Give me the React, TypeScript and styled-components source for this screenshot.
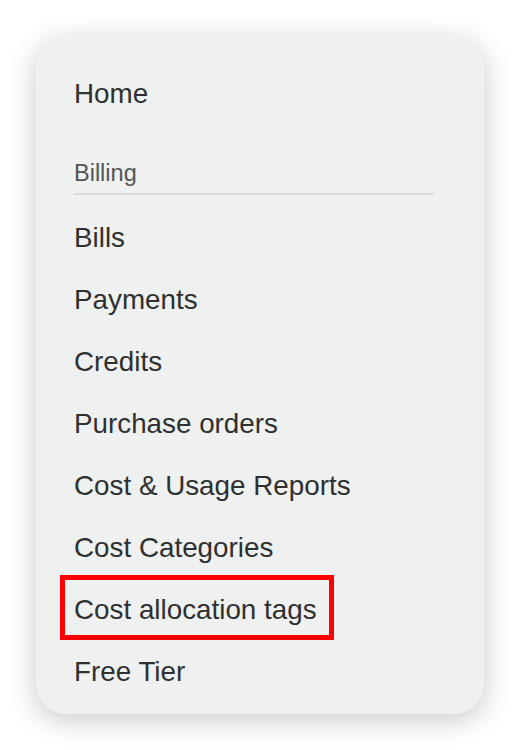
import React from "react";
import styled, { createGlobalStyle } from "styled-components";

const Global = createGlobalStyle`
  html, body { margin: 0; padding: 0; background: #ffffff; }
  body { font-family: "Liberation Sans", Arial, Helvetica, sans-serif; }
`;

const Page = styled.div`
  padding: 36px;
  width: 520px;
  height: 750px;
  box-sizing: border-box;
`;

const Card = styled.nav`
  width: 448px;
  height: 678px;
  box-sizing: border-box;
  background: #eff0f0;
  border-radius: 30px;
  box-shadow: 0 6px 28px rgba(0, 0, 0, 0.22);
  padding: 27px 50px 0 38px;
  display: flex;
  flex-direction: column;
`;

const Item = styled.div`
  height: 62px;
  display: flex;
  align-items: center;
  font-size: 27.8px;
  color: #2f3030;
  white-space: nowrap;
`;

const Label = styled.span<{ $highlight?: boolean }>`
  position: relative;
  display: inline-block;
  line-height: 32px;
  &::after {
    content: "";
    display: ${(p) => (p.$highlight ? "block" : "none")};
    position: absolute;
    left: -14px;
    right: -17px;
    top: -19px;
    bottom: -14px;
    border: 5px solid #ff0000;
  }
`;

const Section = styled.div`
  margin-top: 34px;
  font-size: 23.5px;
  line-height: 28px;
  color: #545555;
  padding-bottom: 6px;
  border-bottom: 2px solid #dedada;
  margin-bottom: 12px;
`;

const items = [
  "Bills",
  "Payments",
  "Credits",
  "Purchase orders",
  "Cost & Usage Reports",
  "Cost Categories",
  "Cost allocation tags",
  "Free Tier",
];

export default function App() {
  return (
    <Page>
      <Global />
      <Card>
        <Item>
          <Label>Home</Label>
        </Item>
        <Section>Billing</Section>
        {items.map((t) => (
          <Item key={t}>
            <Label $highlight={t === "Cost allocation tags"}>{t}</Label>
          </Item>
        ))}
      </Card>
    </Page>
  );
}
